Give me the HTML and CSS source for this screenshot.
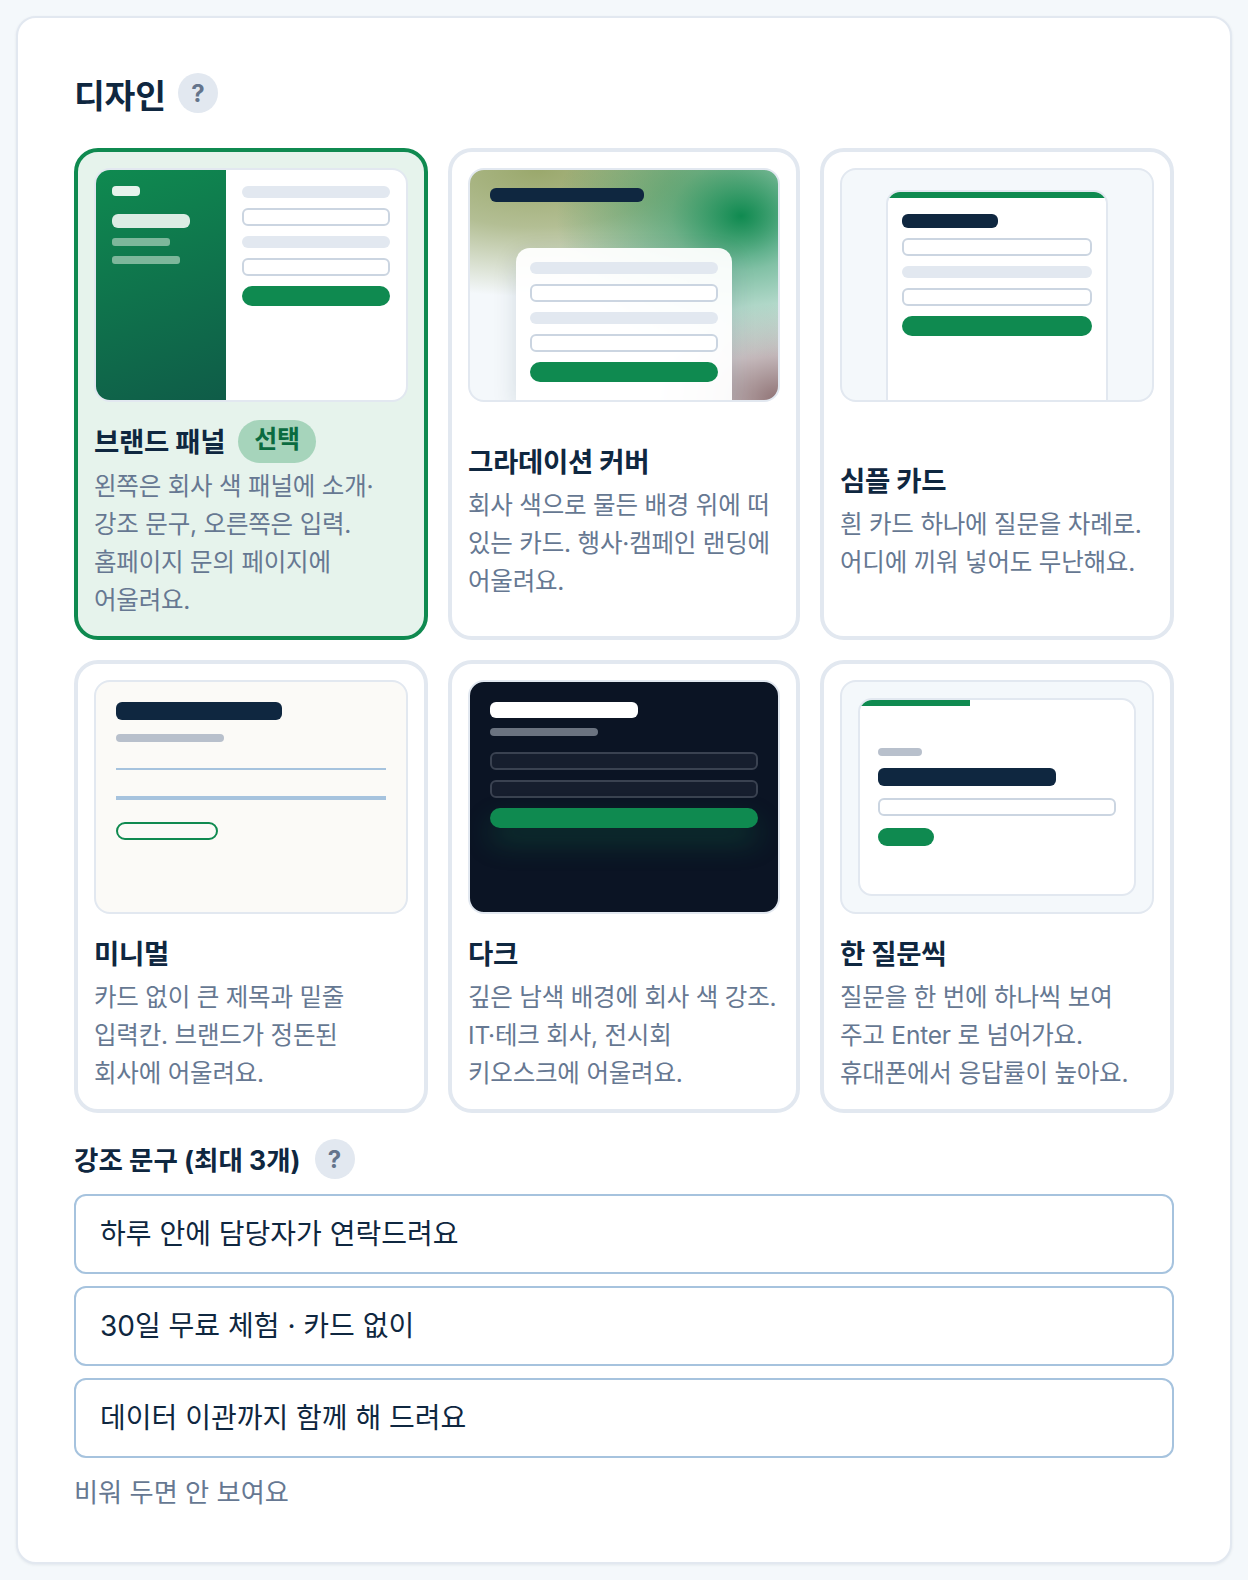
FILE: index.html
```html
<!DOCTYPE html>
<html lang="ko">
<head>
    <meta charset="UTF-8">
    <meta name="viewport" content="width=device-width, initial-scale=1.0">
    <title>디자인</title>
    <link rel="stylesheet" href="styles.css">
</head>
<body>
    <div class="panel">
        <div class="section-title">
            <h2>디자인</h2>
            <span class="help">?</span>
        </div>

        <div class="tiles">
            <div class="tile selected">
                <div class="preview pv-brand">
                    <div class="brand-side">
                        <div class="bar side-logo"></div>
                        <div class="bar side-head"></div>
                        <div class="bar side-line short"></div>
                        <div class="bar side-line"></div>
                    </div>
                    <div class="form-stack brand-form">
                        <div class="bar label"></div>
                        <div class="field"></div>
                        <div class="bar label"></div>
                        <div class="field"></div>
                        <div class="bar submit"></div>
                    </div>
                </div>
                <div class="tile-name">브랜드 패널 <span class="badge">선택</span></div>
                <p class="tile-desc">왼쪽은 회사 색 패널에 소개·<br>강조 문구, 오른쪽은 입력.<br>홈페이지 문의 페이지에<br>어울려요.</p>
            </div>

            <div class="tile">
                <div class="preview pv-cover">
                    <div class="bar cover-title"></div>
                    <div class="form-stack cover-card">
                        <div class="bar label"></div>
                        <div class="field"></div>
                        <div class="bar label"></div>
                        <div class="field"></div>
                        <div class="bar submit"></div>
                    </div>
                </div>
                <div class="tile-name">그라데이션 커버</div>
                <p class="tile-desc">회사 색으로 물든 배경 위에 떠<br>있는 카드. 행사·캠페인 랜딩에<br>어울려요.</p>
            </div>

            <div class="tile">
                <div class="preview pv-simple">
                    <div class="form-stack simple-card">
                        <div class="bar dark-title"></div>
                        <div class="field"></div>
                        <div class="bar label"></div>
                        <div class="field"></div>
                        <div class="bar submit"></div>
                    </div>
                </div>
                <div class="tile-name">심플 카드</div>
                <p class="tile-desc">흰 카드 하나에 질문을 차례로.<br>어디에 끼워 넣어도 무난해요.</p>
            </div>

            <div class="tile">
                <div class="preview pv-minimal">
                    <div class="bar min-title"></div>
                    <div class="bar muted-line"></div>
                    <div class="min-rule thin"></div>
                    <div class="min-rule thick"></div>
                    <div class="min-btn"></div>
                </div>
                <div class="tile-name">미니멀</div>
                <p class="tile-desc">카드 없이 큰 제목과 밑줄<br>입력칸. 브랜드가 정돈된<br>회사에 어울려요.</p>
            </div>

            <div class="tile">
                <div class="preview pv-dark">
                    <div class="bar dark-head"></div>
                    <div class="bar dark-sub"></div>
                    <div class="field dark-field"></div>
                    <div class="field dark-field"></div>
                    <div class="bar submit glow"></div>
                </div>
                <div class="tile-name">다크</div>
                <p class="tile-desc">깊은 남색 배경에 회사 색 강조.<br>IT·테크 회사, 전시회<br>키오스크에 어울려요.</p>
            </div>

            <div class="tile">
                <div class="preview pv-one">
                    <div class="one-card">
                        <div class="one-progress"></div>
                        <div class="bar one-step"></div>
                        <div class="bar one-title"></div>
                        <div class="field"></div>
                        <div class="bar one-btn"></div>
                    </div>
                </div>
                <div class="tile-name">한 질문씩</div>
                <p class="tile-desc">질문을 한 번에 하나씩 보여<br>주고 Enter 로 넘어가요.<br>휴대폰에서 응답률이 높아요.</p>
            </div>
        </div>

        <div class="highlight-label">
            <label>강조 문구 (최대 3개)</label>
            <span class="help">?</span>
        </div>
        <div class="inputs">
            <input class="text-input" type="text" value="하루 안에 담당자가 연락드려요">
            <input class="text-input" type="text" value="30일 무료 체험 · 카드 없이">
            <input class="text-input" type="text" value="데이터 이관까지 함께 해 드려요">
        </div>
        <p class="hint">비워 두면 안 보여요</p>
    </div>
</body>
</html>
```

FILE: styles.css
```css
* {
    box-sizing: border-box;
}
body {
    margin: 0;
    padding: 16px;
    background: #f4f8fb;
    color: #0f2740;
    font-family: Inter, "Noto Sans CJK KR", sans-serif;
}
.panel {
    height: 1548px;
    padding: 51px 56px 0;
    background: #fff;
    border: 2px solid #e2e8f0;
    border-radius: 20px;
    box-shadow: 0 1px 3px rgba(15, 39, 64, 0.08);
}
.section-title {
    display: flex;
    align-items: center;
    gap: 12px;
    height: 48px;
    margin-bottom: 31px;
}
h2 {
    margin: 0;
    font-size: 33.5px;
    font-weight: 700;
    letter-spacing: -0.2px;
}
.help {
    display: flex;
    justify-content: center;
    align-items: center;
    width: 40px;
    height: 40px;
    border-radius: 50%;
    background: #e2e8f0;
    color: #64748b;
    font-size: 24px;
    font-weight: 700;
}
.tiles {
    display: grid;
    grid-template-columns: 354fr 352fr 354fr;
    grid-template-rows: 492px 453px;
    gap: 20px;
}
.tile {
    display: flex;
    flex-direction: column;
    padding: 16px 16px 2px;
    border: 4px solid #e2e8f0;
    border-radius: 24px;
    background: #fff;
}
.tile:nth-child(n+4) {
    padding-bottom: 3px;
}
.tile.selected {
    padding-bottom: 0;
    background: #e6f3ec;
    border-color: #0f8a50;
}
.tile-name {
    display: flex;
    align-items: flex-end;
    gap: 12px;
    height: 44px;
    margin-top: auto;
    margin-bottom: 5px;
    font-size: 27.5px;
    font-weight: 700;
    line-height: 38px;
    letter-spacing: -0.3px;
}
.selected .tile-name {
    align-items: center;
    gap: 13px;
    margin-bottom: 3px;
}
.badge {
    height: 43px;
    padding: 0 16px;
    border-radius: 22px;
    background: #a6d4bb;
    color: #0a6b40;
    font-size: 25px;
    font-weight: 600;
    line-height: 39px;
}
.tile-desc {
    margin: 0 0 auto;
    color: #667892;
    font-size: 24.5px;
    line-height: 38px;
    letter-spacing: -0.2px;
}

/* previews */
.preview {
    position: relative;
    flex: none;
    height: 234px;
    border: 2px solid #e2e8f0;
    border-radius: 16px;
    overflow: hidden;
    background: #fff;
}
.bar {
    border-radius: 6px;
}
.field {
    height: 18px;
    border: 2px solid #cbd5e1;
    border-radius: 6px;
    background: #fff;
}
.form-stack {
    display: flex;
    flex-direction: column;
    gap: 10px;
}
.label {
    height: 12px;
    background: #e2e8f0;
}
.submit {
    height: 20px;
    border-radius: 10px;
    background: #0f8a50;
}

.pv-brand {
    display: flex;
}
.brand-side {
    display: flex;
    flex-direction: column;
    width: 130px;
    padding: 16px;
    background: linear-gradient(160deg, #0f8a50, #0f5c48);
}
.side-logo {
    width: 28px;
    height: 10px;
    margin-bottom: 18px;
    background: #e6f3ec;
    border-radius: 4px;
}
.side-head {
    width: 78px;
    height: 14px;
    margin-bottom: 10px;
    background: #dcece4;
}
.side-line {
    width: 68px;
    height: 8px;
    margin-bottom: 10px;
    background: #7db79b;
    border-radius: 3px;
}
.side-line.short {
    width: 58px;
}
.brand-form {
    flex: 1;
    padding: 16px 16px 0;
}

.pv-cover {
    background:
        radial-gradient(ellipse 60% 62% at 88% 20%, #0f8a50 0, rgba(15, 138, 80, 0.5) 38%, rgba(15, 138, 80, 0) 100%),
        radial-gradient(ellipse 95% 55% at 22% 0, #9aa86c 0, rgba(154, 168, 108, 0.72) 45%, rgba(154, 168, 108, 0) 100%),
        radial-gradient(ellipse 40% 42% at 100% 100%, #8f7274 0, rgba(143, 114, 116, 0.4) 55%, rgba(143, 114, 116, 0) 100%),
        #f4f8fb;
}
.cover-title {
    position: absolute;
    top: 18px;
    left: 20px;
    width: 154px;
    height: 14px;
    background: #0f2740;
}
.cover-card {
    position: absolute;
    top: 78px;
    left: 46px;
    bottom: 0;
    width: 216px;
    padding: 14px 14px 0;
    background: rgba(255, 255, 255, 0.94);
    border-radius: 14px 14px 0 0;
    box-shadow: 0 8px 24px rgba(15, 39, 64, 0.14);
}

.pv-simple {
    display: flex;
    justify-content: center;
    align-items: flex-start;
    padding-top: 20px;
    background: #f4f8fb;
}
.simple-card {
    position: relative;
    width: 222px;
    height: 212px;
    padding: 22px 14px 0;
    background: #fff;
    border: 2px solid #e2e8f0;
    border-radius: 14px 14px 0 0;
    overflow: hidden;
}
.simple-card::before {
    content: "";
    position: absolute;
    top: 0;
    left: 0;
    right: 0;
    height: 6px;
    background: #0f8a50;
}
.dark-title {
    width: 96px;
    height: 14px;
    background: #0f2740;
}

.pv-minimal {
    padding: 20px 20px 0;
    background: #fbfaf7;
}
.min-title {
    width: 166px;
    height: 18px;
    background: #0f2740;
}
.muted-line {
    width: 108px;
    height: 8px;
    margin-top: 14px;
    background: #b8c0cc;
    border-radius: 4px;
}
.min-rule {
    width: 270px;
    background: #a6c3de;
}
.min-rule.thin {
    height: 2px;
    margin-top: 26px;
}
.min-rule.thick {
    height: 4px;
    margin-top: 26px;
}
.min-btn {
    width: 102px;
    height: 18px;
    margin-top: 22px;
    border: 2px solid #0f8a50;
    border-radius: 9px;
}

.pv-dark {
    display: flex;
    flex-direction: column;
    padding: 20px 20px 0;
    background: #0b1424;
}
.dark-head {
    width: 148px;
    height: 16px;
    background: #fff;
}
.dark-sub {
    width: 108px;
    height: 8px;
    margin-top: 10px;
    background: #6b7380;
    border-radius: 4px;
}
.dark-field {
    background: #161e2e;
    border-color: #3a4251;
    margin-top: 10px;
}
.dark-sub + .dark-field {
    margin-top: 16px;
}
.glow {
    margin-top: 10px;
    box-shadow: 0 14px 28px rgba(15, 138, 80, 0.3);
}

.pv-one {
    padding: 16px;
    background: #f4f8fb;
}
.one-card {
    position: relative;
    height: 198px;
    padding: 48px 18px 0;
    background: #fff;
    border: 2px solid #e2e8f0;
    border-radius: 14px;
    overflow: hidden;
}
.one-progress {
    position: absolute;
    top: 0;
    left: 0;
    width: 110px;
    height: 6px;
    background: #0f8a50;
}
.one-step {
    width: 44px;
    height: 8px;
    background: #b8c0cc;
    border-radius: 4px;
}
.one-title {
    width: 178px;
    height: 18px;
    margin-top: 12px;
    background: #0f2740;
}
.one-card .field {
    margin-top: 12px;
}
.one-btn {
    width: 56px;
    height: 18px;
    margin-top: 12px;
    background: #0f8a50;
    border-radius: 9px;
}

/* highlight inputs */
.highlight-label {
    display: flex;
    align-items: center;
    gap: 14px;
    height: 40px;
    margin-top: 26px;
    font-size: 26.5px;
    font-weight: 700;
}
.highlight-label label {
    padding-bottom: 2px;
}
.inputs {
    display: flex;
    flex-direction: column;
    gap: 12px;
    margin-top: 15px;
}
.text-input {
    width: 100%;
    height: 80px;
    padding: 0 24px 4px;
    border: 2px solid #a6c3de;
    border-radius: 12px;
    background: #fff;
    color: #0f2740;
    font-family: inherit;
    font-size: 28px;
}
.hint {
    margin: 14px 0 0;
    color: #667892;
    font-size: 26.2px;
}
```
